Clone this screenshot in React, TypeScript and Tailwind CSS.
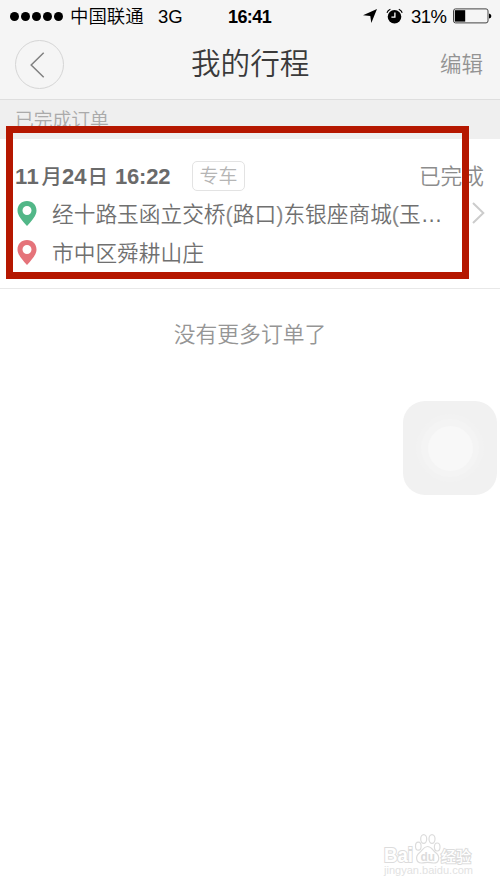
import { ReactNode } from "react";

const cjk = "font-['Liberation_Sans','Noto_Sans_CJK_SC',sans-serif]";

function StatusBar() {
    return (
        <div className="flex h-8 items-center text-black">
            <ul className="ml-[10px] flex w-[60px] gap-[2px]">
                {[0, 1, 2, 3, 4].map((dot) => (
                    <li key={dot} className="size-[9px] rounded-full bg-black" />
                ))}
            </ul>
            <span className="w-[88px] pt-px text-[18.4px] leading-8 font-[350] whitespace-nowrap">中国联通</span>
            <span className="w-[70px] pt-px text-[18.5px] leading-8">3G</span>
            <span className="w-[135px] pt-px text-[18px] leading-8 font-bold tracking-[-0.6px]">16:41</span>
            <svg width="14" height="14" viewBox="0 0 14 14">
                <path d="M14 0 8.3 14 7.3 6.9 0 6.3Z" fill="#000" />
            </svg>
            <svg className="ml-[9px]" width="18" height="17" viewBox="0 0 18 17">
                <circle cx="8.5" cy="8.8" r="6.8" fill="#000" />
                <path d="M1 4.8Q1.8 2.4 4.4 1.3M12.8 1.3Q15.3 2.4 16.2 4.8" fill="none" stroke="#000" strokeWidth="1.2" />
                <path d="M8.9 4.6V9.2H5.4" fill="none" stroke="#fff" strokeWidth="1.3" />
            </svg>
            <span className="ml-[7px] w-[42px] pt-px text-[18.5px] leading-8 tracking-[-0.5px]">31%</span>
            <svg width="39" height="16" viewBox="0 0 39 16">
                <rect x="0.5" y="0.9" width="34.5" height="14" rx="2" fill="none" stroke="#444" />
                <rect x="1.8" y="2.2" width="10.4" height="11.4" fill="#000" />
                <path d="M36 5.4Q38.4 6 38.4 8T36 10.6Z" fill="#000" />
            </svg>
        </div>
    );
}

function NavBar() {
    return (
        <div className="flex h-[67px] items-start pr-[17px] pl-[15px]">
            <button className="mt-[8px] flex size-[49px] items-center justify-center rounded-full border border-[#d5d5d5]">
                <svg className="mr-[5px]" width="15" height="26" viewBox="0 0 15 26">
                    <path d="M13.7 0.8 1.2 13 13.7 25.2" fill="none" stroke="#808080" strokeWidth="1.5" />
                </svg>
            </button>
            <h1 className="ml-[127px] text-[29.6px] leading-[63px] font-[350] text-[#3a3a3a]">我的行程</h1>
            <button className="ml-auto text-[21.5px] leading-[67px] font-[350] text-[#939393]">编辑</button>
        </div>
    );
}

function Place({ color, children }: { color: string; children: ReactNode }) {
    return (
        <li className="flex h-[39px] items-center">
            <svg width="20" height="25" viewBox="0 0 20 25">
                <path
                    d="M10 0C4.4 0 .5 4.1.5 9.4.5 14.5 5 19.4 10 25c5-5.6 9.5-10.5 9.5-15.6C19.5 4.1 15.6 0 10 0Zm0 5a4.5 4.5 0 1 1 0 9 4.5 4.5 0 0 1 0-9Z"
                    fill={color}
                    fillRule="evenodd"
                />
            </svg>
            <span className="ml-[15px] pt-[2px] text-[21.7px] leading-[39px] font-[350] whitespace-nowrap text-[#707070]">
                {children}
            </span>
        </li>
    );
}

function TripCard() {
    return (
        <article className="h-[150px] border-b border-[#e8e8e8] bg-white pt-[17px]">
            <div className="flex h-[38px] items-center pr-[16px] pl-[15px]">
                <span className="w-[177px] pt-[3px] text-[22px] leading-[38px] font-bold whitespace-nowrap text-[#6a6a6a]">
                    <span className="tracking-[0.6px]">11</span>
                    <span className="ml-[2px] text-[20.5px] font-medium">月</span>24
                    <span className="ml-px text-[20.5px] font-medium">日</span>
                    <span className="ml-[7px] tracking-[-0.2px]">16:22</span>
                </span>
                <span className="mt-[2px] flex h-[30px] w-[53px] items-center justify-center rounded-[5px] border border-[#e3e3e3] pt-[2px] text-[19px] font-[350] text-[#b5b5b5]">
                    专车
                </span>
                <span className="ml-auto pt-[3px] text-[21.7px] leading-[38px] font-[350] text-[#8c8c8c]">已完成</span>
            </div>
            <div className="flex pr-[15px] pl-[17px]">
                <ul>
                    <Place color="#52b788">
                        经十路玉函立交桥<span className="text-[#888]">(</span>路口<span className="text-[#888]">)</span>
                        东银座商城<span className="text-[#888]">(</span>玉…
                    </Place>
                    <Place color="#e5737a">市中区舜耕山庄</Place>
                </ul>
                <svg className="mt-[8px] ml-auto" width="13" height="22" viewBox="0 0 13 22">
                    <path d="M1 1 11.3 11 1 21" fill="none" stroke="#ccc" strokeWidth="2" />
                </svg>
            </div>
        </article>
    );
}

function AssistiveTouch() {
    return (
        <div className="absolute top-[401px] left-[403px] flex size-[94px] items-center justify-center rounded-[22px] bg-[#f1f1f1]">
            <div className="flex size-[68px] items-center justify-center rounded-full bg-[#f2f2f2]">
                <div className="flex size-[58px] items-center justify-center rounded-full bg-[#f4f4f4]">
                    <div className="size-[45px] rounded-full bg-[#f8f8f8]" />
                </div>
            </div>
        </div>
    );
}

function Watermark() {
    return (
        <svg
            className="absolute top-[830px] left-[380px] font-['Liberation_Sans','Noto_Sans_CJK_SC',sans-serif]"
            width="100"
            height="50"
            viewBox="0 0 100 50"
            fill="#fff"
            stroke="#dcdcdc"
            strokeWidth="1.2"
        >
            <text x="4" y="32" fontSize="20" fontWeight="700" strokeWidth="2" paintOrder="stroke" textLength="29" lengthAdjust="spacingAndGlyphs">
                Bai
            </text>
            <ellipse cx="38.3" cy="16.2" rx="2.8" ry="4" />
            <ellipse cx="43.7" cy="9" rx="3" ry="4.3" />
            <ellipse cx="52" cy="9" rx="3" ry="4.3" />
            <ellipse cx="57.2" cy="17" rx="2.8" ry="4" />
            <path d="M47.5 16.5c-4 0-5 4-8 6.2-4.5 3.4-3.6 10.3 2 10.3 2.5 0 4-.7 6-.7s4 .7 6.3.7c5.5 0 6.7-6.5 2-10.3-3-2.3-4.3-6.2-8.3-6.2Z" />
            <text x="40.5" y="31" fontSize="13" fontWeight="700" fill="#dcdcdc" stroke="none" textLength="14.5" lengthAdjust="spacingAndGlyphs">
                du
            </text>
            <text x="61" y="31.5" fontSize="15" fontWeight="500" strokeWidth="2" paintOrder="stroke" textLength="30">
                经验
            </text>
            <text x="4" y="44" fontSize="11" fill="#e2e2e2" stroke="none" textLength="89" lengthAdjust="spacingAndGlyphs">
                jingyan.baidu.com
            </text>
        </svg>
    );
}

export default function App() {
    return (
        <main className={`relative h-[888px] w-[500px] overflow-hidden bg-white ${cjk}`}>
            <header className="h-[100px] border-b border-[#dedede] bg-[#f5f5f5]">
                <StatusBar />
                <NavBar />
            </header>
            <h2 className="h-[39px] bg-[#efefef] pl-[15px] text-[18.8px] leading-[42px] font-[350] text-[#aaa]">已完成订单</h2>
            <TripCard />
            <p className="mt-[26px] text-center text-[21.8px] leading-[40px] font-[350] text-[#959595]">没有更多订单了</p>

            {/* highlight around the finished trip */}
            <div className="absolute top-[126px] left-[6px] h-[153px] w-[463px] border-[7px] border-[#b51700]" />
            <AssistiveTouch />
            <Watermark />
        </main>
    );
}
